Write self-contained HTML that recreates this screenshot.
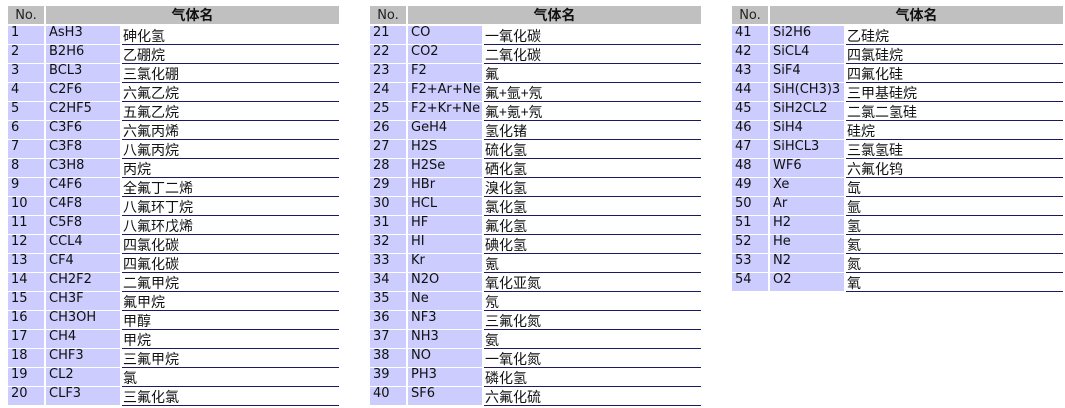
<!DOCTYPE html>
<html><head><meta charset="utf-8"><style>
body{margin:0;background:#fff;width:1065px;height:408px;overflow:hidden;position:relative;font-family:"DejaVu Sans","Noto Sans CJK SC",sans-serif;color:#111}
.t{position:absolute;top:6px;width:331px}
.h{position:absolute;top:0;height:18px;background:#c0c0c0;font-size:13px;line-height:19px;text-align:center}
.h1{left:0;width:36px;color:#222}
.h2{left:38px;width:293px;font-weight:bold;font-size:14px;font-family:"Noto Sans CJK SC",sans-serif;line-height:18px}
.r{position:absolute;left:0;width:331px;height:19px}
.a,.b{position:absolute;top:0;height:18px;background:#ccccff;font-size:13px;line-height:14px;padding-left:3px;box-sizing:border-box;white-space:nowrap}
.a{left:0;width:36px}
.b{left:38px;width:74px}
.c{position:absolute;left:114px;top:0;width:216px;height:18px;border-bottom:1px solid #1a1a60;font-size:14px;line-height:21px;padding-left:1px;white-space:nowrap;font-family:"WenQuanYi Zen Hei","Noto Sans CJK SC",sans-serif;overflow:hidden}
</style></head><body>
<div id="w"></div>
<script>
var d=[["AsH3","砷化氢"],["B2H6","乙硼烷"],["BCL3","三氯化硼"],["C2F6","六氟乙烷"],["C2HF5","五氟乙烷"],["C3F6","六氟丙烯"],["C3F8","八氟丙烷"],["C3H8","丙烷"],["C4F6","全氟丁二烯"],["C4F8","八氟环丁烷"],["C5F8","八氟环戊烯"],["CCL4","四氯化碳"],["CF4","四氟化碳"],["CH2F2","二氟甲烷"],["CH3F","氟甲烷"],["CH3OH","甲醇"],["CH4","甲烷"],["CHF3","三氟甲烷"],["CL2","氯"],["CLF3","三氟化氯"],
["CO","一氧化碳"],["CO2","二氧化碳"],["F2","氟"],["F2+Ar+Ne","氟+氩+氖"],["F2+Kr+Ne","氟+氪+氖"],["GeH4","氢化锗"],["H2S","硫化氢"],["H2Se","硒化氢"],["HBr","溴化氢"],["HCL","氯化氢"],["HF","氟化氢"],["HI","碘化氢"],["Kr","氪"],["N2O","氧化亚氮"],["Ne","氖"],["NF3","三氟化氮"],["NH3","氨"],["NO","一氧化氮"],["PH3","磷化氢"],["SF6","六氟化硫"],
["Si2H6","乙硅烷"],["SiCL4","四氯硅烷"],["SiF4","四氟化硅"],["SiH(CH3)3","三甲基硅烷"],["SiH2CL2","二氯二氢硅"],["SiH4","硅烷"],["SiHCL3","三氯氢硅"],["WF6","六氟化钨"],["Xe","氙"],["Ar","氩"],["H2","氢"],["He","氦"],["N2","氮"],["O2","氧"]];
var h="";
for(var t=0;t<3;t++){h+='<div class="t" style="left:'+(8+362*t)+'px"><div class="h h1">No.</div><div class="h h2">气体名</div>';
for(var i=0;i<20;i++){var k=t*20+i;if(k>=d.length)break;
h+='<div class="r" style="top:'+(20+19*i)+'px"><div class="a">'+(k+1)+'</div><div class="b">'+d[k][0]+'</div><div class="c">'+d[k][1]+'</div></div>';}
h+='</div>';}
document.getElementById("w").innerHTML=h;
</script>
</body></html>
